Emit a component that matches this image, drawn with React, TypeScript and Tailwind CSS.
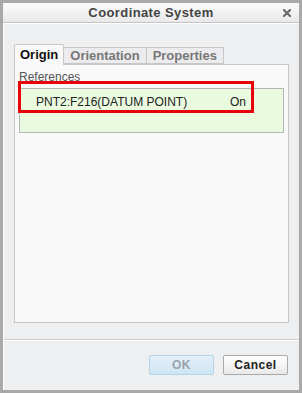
import React from "react";

export default function App() {
  return (
    <div className="w-[302px] h-[393px] bg-[#eeeff1] border-[3px] border-[#a9a9a9] flex flex-col font-['Liberation_Sans',Arial,sans-serif] select-none">
      {/* Title bar */}
      <div className="relative h-[20px] shrink-0 bg-gradient-to-b from-[#fbfbfb] to-[#e9e9eb] border-b border-[#c4c4c4] flex items-center justify-center">
        <span className="text-[13px] font-bold text-[#444] tracking-[0.4px]">Coordinate System</span>
        <svg className="absolute right-[8px] top-[6px]" width="8" height="8" viewBox="0 0 8 8">
          <path d="M1 1 L7 7 M7 1 L1 7" stroke="#6a6a6a" strokeWidth="2.2" strokeLinecap="square" />
        </svg>
      </div>

      <div className="flex-1 flex flex-col border-l border-t border-white">
        {/* Tabs + panel */}
        <div className="px-[10px] pt-[19px] flex flex-col">
          <div className="flex items-end h-[21px]">
            <div className="relative z-10 h-[21px] px-[5px] -mb-px bg-[#f9f9f9] border border-b-0 border-[#c6c6c6] rounded-t-[2px] flex items-center text-[13px] font-bold text-[#111]">
              Origin
            </div>
            <div className="h-[17px] px-[6px] bg-[#ececee] border border-l-0 border-[#c6c6c6] flex items-center text-[13px] font-bold text-[#777]">
              Orientation
            </div>
            <div className="h-[17px] px-[6px] bg-[#ececee] border border-l-0 border-[#c6c6c6] flex items-center text-[13px] font-bold text-[#777]">
              Properties
            </div>
          </div>
          <div className="relative h-[259px] bg-[#f9f9f9] border border-[#c6c6c6] px-[4px] pt-[5px]">
            <div className="text-[12px] leading-[14px] text-[#555]">References</div>
            <div className="mt-[4px] h-[45px] bg-[#e9fadf] border border-[#b4b4b4] flex items-start pt-[4px] text-[12px] text-[#222]">
              <span className="pl-[16px] w-[210px]">PNT2:F216(DATUM POINT)</span>
              <span>On</span>
            </div>
            <div className="absolute left-[3px] top-[16px] w-[236px] h-[32px] border-[3px] border-[#e8000b]" />
          </div>
        </div>

        {/* Separator */}
        <div className="mt-[16px] border-t border-[#d0d0d2] border-b border-b-white" />

        {/* Buttons */}
        <div className="flex justify-end gap-[9px] pr-[11px] pt-[14px]">
          <div className="w-[65px] h-[20px] rounded-[2px] border border-[#b7d3e6] bg-gradient-to-b from-[#e2f0fa] to-[#cfe5f5] flex items-center justify-center text-[12px] font-bold text-[#9aa3aa] tracking-[0.5px]">
            OK
          </div>
          <div className="w-[65px] h-[20px] rounded-[2px] border border-[#a9a9a9] bg-gradient-to-b from-[#ffffff] to-[#e9e9e9] flex items-center justify-center text-[12px] font-bold text-[#222] tracking-[0.5px]">
            Cancel
          </div>
        </div>
      </div>
    </div>
  );
}
